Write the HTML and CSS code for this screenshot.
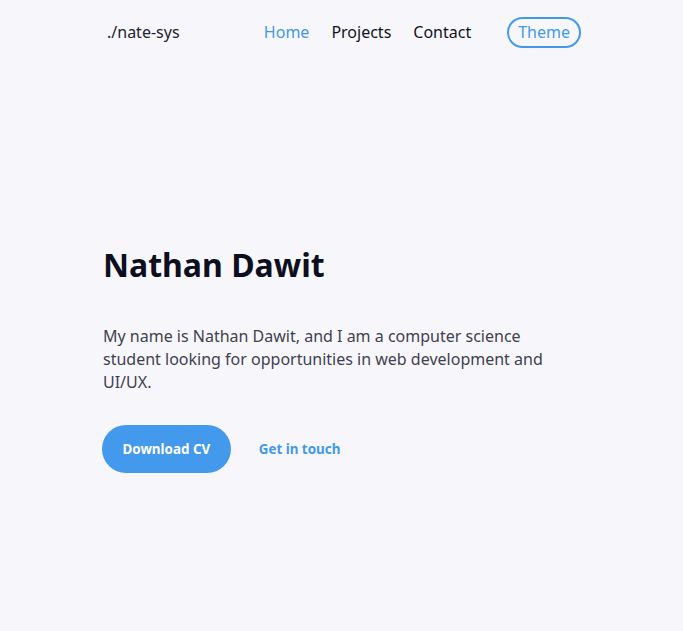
FILE: index.html
```html
<!DOCTYPE html>
<html lang="en">
<head>
<meta charset="utf-8">
<title>nate-sys</title>
<link rel="stylesheet" href="styles.css">
</head>
<body>
<div class="page">
  <header class="nav">
    <a class="logo" href="#">./nate-sys</a>
    <nav class="links">
      <a class="link active" href="#">Home</a>
      <a class="link" href="#">Projects</a>
      <a class="link" href="#">Contact</a>
      <button class="theme">Theme</button>
    </nav>
  </header>
  <main class="hero">
    <h1 class="title">Nathan Dawit</h1>
    <p class="intro">My name is Nathan Dawit, and I am a computer science student looking for opportunities in web development and UI/UX.</p>
    <div class="actions">
      <a class="btn-primary" href="#">Download CV</a>
      <a class="btn-link" href="#">Get in touch</a>
    </div>
  </main>
</div>
</body>
</html>
```
FILE: styles.css
```css
* { box-sizing: border-box; }
html, body { margin: 0; padding: 0; }
body {
  background: #f7f7fb;
  font-family: "Noto Sans", sans-serif;
  color: #111827;
  min-height: 631px;
}
.page {
  width: 477px;
  margin: 0 auto;
}
.nav {
  height: 64px;
  display: flex;
  align-items: center;
}
.logo {
  font-size: 16px;
  color: #1f2230;
  text-decoration: none;
  padding-left: 4px;
}
.links {
  margin-left: auto;
  margin-right: -1px;
  display: flex;
  align-items: center;
  gap: 22px;
}
.link {
  font-size: 16px;
  color: #111321;
  text-decoration: none;
  line-height: 24px;
}
.link.active { color: #4299e9; }
.theme {
  margin-left: 14px;
  font-family: inherit;
  font-size: 16px;
  line-height: 24px;
  color: #4299e9;
  background: transparent;
  border: 2px solid #4299e9;
  border-radius: 999px;
  padding: 1.5px 9px;
  cursor: pointer;
}
.hero {
  padding-top: 181px;
}
.title {
  margin: 0;
  font-size: 32px;
  line-height: 40px;
  font-weight: 700;
  color: #0d0f1e;
}
.intro {
  margin: 40px 0 0;
  max-width: 460px;
  font-size: 16px;
  line-height: 23px;
  color: #3f4050;
}
.actions {
  margin-top: 31px;
  display: flex;
  align-items: center;
  gap: 28px;
}
.btn-primary {
  display: inline-flex;
  align-items: center;
  justify-content: center;
  height: 48px;
  padding: 0 20.5px;
  margin-left: -1px;
  border-radius: 24px;
  background: #4399ec;
  color: #fff;
  font-size: 13.4px;
  font-weight: 700;
  text-decoration: none;
}
.btn-link {
  color: #4299e9;
  font-size: 13.4px;
  font-weight: 700;
  text-decoration: none;
}
```
